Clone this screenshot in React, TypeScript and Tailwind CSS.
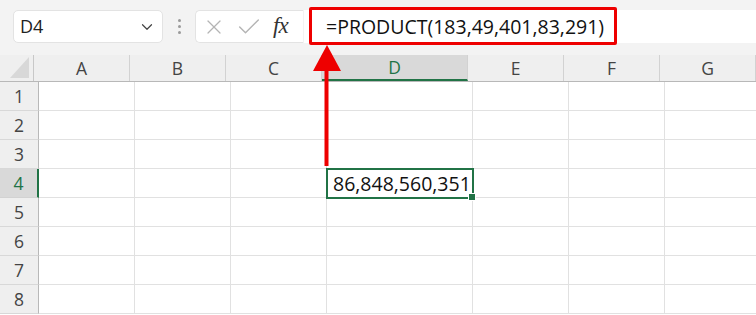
import { ChevronDown, X, Check } from 'lucide-react';

const cols = [
  { name: 'A', w: 'w-[96px]' },
  { name: 'B', w: 'w-[96px]' },
  { name: 'C', w: 'w-[96px]' },
  { name: 'D', w: 'w-[146px]' },
  { name: 'E', w: 'w-[96px]' },
  { name: 'F', w: 'w-[96px]' },
  { name: 'G', w: 'w-[96px]' },
];

const rows = [1, 2, 3, 4, 5, 6, 7, 8];

const App = () => {
  return (
    <div className="relative w-[756px] h-[315px] overflow-hidden bg-white font-['Open_Sans',sans-serif] text-[#222]">
      {/* Toolbar */}
      <div className="flex items-center h-[55px] bg-[#f3f3f3] pl-[13px] pb-[2px]">
        <div className="flex items-center justify-between w-[150px] h-[33px] bg-white rounded-[5px] border border-[#e3e3e3] pl-[6px] pr-[6px]">
          <span className="text-[18px]">D4</span>
          <ChevronDown className="w-[18px] h-[18px] text-[#444]" strokeWidth={1.6} />
        </div>
        <div className="flex flex-col items-center justify-center gap-[3px] w-[32px]">
          <span className="w-[3px] h-[3px] rounded-full bg-[#9a9a9a]" />
          <span className="w-[3px] h-[3px] rounded-full bg-[#9a9a9a]" />
          <span className="w-[3px] h-[3px] rounded-full bg-[#9a9a9a]" />
        </div>
        <div className="flex items-center w-[108px] h-[33px] bg-white rounded-l-[5px] border border-r-0 border-[#e3e3e3] pl-[6px]">
          <X className="w-[24px] h-[24px] text-[#b4b4b4]" strokeWidth={1.2} />
          <Check className="w-[28px] h-[28px] text-[#b4b4b4] ml-[9px]" strokeWidth={1.2} />
          <span className="ml-[10px] text-[23px] italic text-[#333] font-['Liberation_Serif',serif] tracking-[-1px]">fx</span>
        </div>
        <div className="flex-1 h-[33px] bg-white border-l border-[#f3f3f3] flex items-center pl-[22px]">
          <span className="text-[19.5px] text-[#111]">=PRODUCT(183,49,401,83,291)</span>
        </div>
      </div>

      {/* Column headers */}
      <div className="flex h-[27px] bg-[#efefef] border-b border-[#b8b8b8]">
        <div className="relative w-[39px] border-r border-[#c8c8c8]">
          <div className="absolute right-[4px] bottom-[3px] w-0 h-0 border-l-[19px] border-l-transparent border-b-[21px] border-b-[#d8d8d8]" />
        </div>
        {cols.map((c) =>
          c.name === 'D' ? (
            <div
              key={c.name}
              className={`${c.w} shrink-0 flex items-center justify-center bg-[#d9d9d9] border-r border-[#d2d2d2] border-b-2 border-b-[#217346] text-[17.5px] text-[#217346]`}
            >
              {c.name}
            </div>
          ) : (
            <div
              key={c.name}
              className={`${c.w} shrink-0 flex items-center justify-center border-r border-[#d2d2d2] text-[17.5px] text-[#444]`}
            >
              {c.name}
            </div>
          )
        )}
      </div>

      {/* Rows */}
      {rows.map((r) => (
        <div key={r} className="flex h-[29px]">
          {r === 4 ? (
            <div className="w-[39px] shrink-0 flex items-center justify-center bg-[#d9d9d9] border-r-2 border-[#217346] border-b border-b-[#d2d2d2] text-[17.5px] text-[#217346]">
              {r}
            </div>
          ) : (
            <div className="w-[39px] shrink-0 flex items-center justify-center bg-[#efefef] border-r border-[#b8b8b8] border-b border-b-[#d8d8d8] text-[17.5px] text-[#444]">
              {r}
            </div>
          )}
          {cols.map((c) => (
            <div key={c.name} className={`${c.w} shrink-0 border-r border-b border-[#e1e1e1]`} />
          ))}
        </div>
      ))}

      {/* Active cell D4 */}
      <div className="absolute left-[326px] top-[168px] w-[148px] h-[31px] border-2 border-[#217346] flex items-center pl-[5px]">
        <span className="text-[19.5px] text-[#111]">86,848,560,351</span>
        <div className="absolute right-[-4px] bottom-[-4px] w-[6px] h-[6px] bg-[#217346] border border-white box-content" />
      </div>

      {/* Red highlight around formula */}
      <div className="absolute left-[309px] top-[7px] w-[308px] h-[38px] border-[3px] border-[#ee0000] rounded-[2px]" />

      {/* Red arrow */}
      <svg className="absolute left-[310px] top-[44px]" width="34" height="124" viewBox="0 0 34 124">
        <polygon points="17,1 3,27 31,27" fill="#ee0000" />
        <rect x="14.5" y="26" width="4" height="96" fill="#ee0000" />
      </svg>
    </div>
  );
};

export default App;
